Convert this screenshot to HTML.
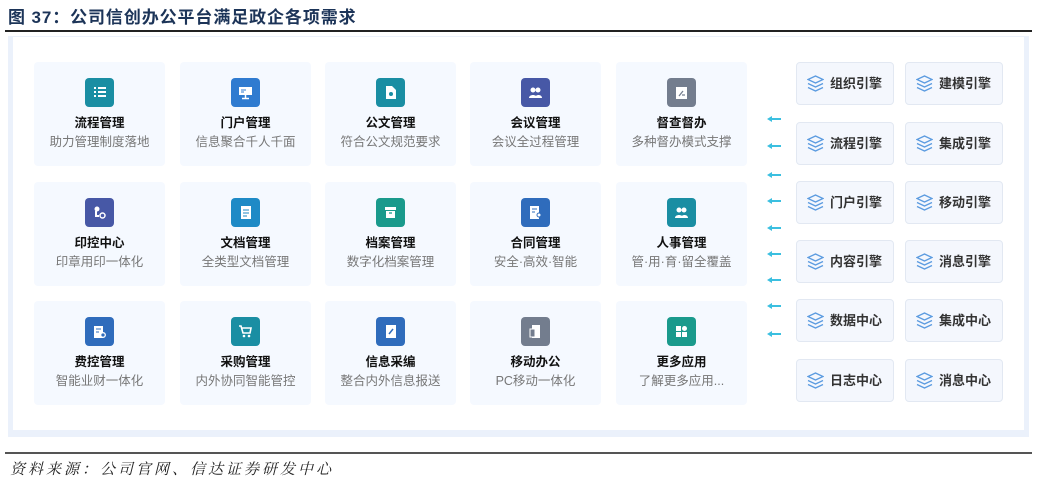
<!DOCTYPE html>
<html><head><meta charset="utf-8"><style>
*{margin:0;padding:0;box-sizing:border-box}
body{width:1037px;height:483px;background:#fff;position:relative;overflow:hidden;font-family:"Liberation Sans","Noto Sans CJK SC",sans-serif}
.title{position:absolute;left:8px;top:3px;font-size:17px;font-weight:bold;color:#1c3458;letter-spacing:0.9px}
.hl{position:absolute;left:5px;width:1027px;height:1.5px;background:#222}
.frame{position:absolute;left:8px;top:36px;width:1021px;height:401px;background:#ebf1fb}
.inner{position:absolute;left:13px;top:37px;width:1011px;height:393px;background:#fff}
.card{position:absolute;width:131px;height:104px;background:#f5f9ff;border-radius:4px}
.ic{position:absolute;left:51px;top:16px;width:29px;height:29px;border-radius:4px}
.ic svg{position:absolute;left:7px;top:7px}
.t{position:absolute;left:0;width:100%;top:50px;text-align:center;font-size:12.5px;font-weight:bold;color:#111}
.s{position:absolute;left:0;width:100%;top:69px;text-align:center;font-size:12.5px;color:#777}
.eng{position:absolute;width:98px;height:43px;background:#f4f7fd;border:1px solid #e2e8f2;border-radius:4px}
.eng svg{position:absolute;left:10px;top:12px}
.eng span{position:absolute;left:33px;top:10px;font-size:13px;font-weight:bold;color:#333}
.ar{position:absolute;left:767px;width:14px;height:6px}
.foot{position:absolute;left:10px;top:458px;font-size:15px;font-style:italic;color:#222;font-family:"Liberation Serif","Noto Serif CJK SC",serif;letter-spacing:3px}
</style></head><body>
<div class="title">图 37：公司信创办公平台满足政企各项需求</div>
<div class="hl" style="top:30px"></div>
<div class="frame"></div><div class="inner"></div>

<div class="card" style="left:34px;top:62px"><div class="ic" style="background:#1a8ea3"><svg width="15" height="15"><path d="M2 3h2M6 3h8M2 7h2M6 7h8M2 11h2M6 11h8" stroke="#fff" stroke-width="2"/></svg></div><div class="t">流程管理</div><div class="s">助力管理制度落地</div></div>
<div class="card" style="left:180px;top:62px"><div class="ic" style="background:#2f7bd0"><svg width="15" height="15"><rect x="1" y="2" width="13" height="8" fill="#fff"/><path d="M7.5 10v3M4 13.5h7" stroke="#fff" stroke-width="1.5"/><path d="M3 5h5M3 7h3" stroke="#2f7bd0"/></svg></div><div class="t">门户管理</div><div class="s">信息聚合千人千面</div></div>
<div class="card" style="left:325px;top:62px"><div class="ic" style="background:#1a8ea3"><svg width="15" height="15"><path d="M3 1h6l4 4v9H3z" fill="#fff"/><circle cx="8" cy="9" r="2" fill="#1a8ea3"/></svg></div><div class="t">公文管理</div><div class="s">符合公文规范要求</div></div>
<div class="card" style="left:470px;top:62px"><div class="ic" style="background:#4758a6"><svg width="15" height="15"><circle cx="5" cy="5" r="2.5" fill="#fff"/><circle cx="10" cy="5" r="2.5" fill="#fff"/><path d="M1 13c0-4 8-4 8 0zM7 13c0-4 7-4 7 0z" fill="#fff"/></svg></div><div class="t">会议管理</div><div class="s">会议全过程管理</div></div>
<div class="card" style="left:616px;top:62px"><div class="ic" style="background:#737d8e"><svg width="15" height="15"><rect x="2" y="2" width="11" height="12" fill="#fff"/><path d="M5 11l4-5M8 10h3" stroke="#737d8e" stroke-width="1.3"/></svg></div><div class="t">督查督办</div><div class="s">多种督办模式支撑</div></div>

<div class="card" style="left:34px;top:182px"><div class="ic" style="background:#4758a6"><svg width="15" height="15"><circle cx="5" cy="4" r="2.5" fill="#fff"/><path d="M4 6v5h3" stroke="#fff" stroke-width="2" fill="none"/><circle cx="10.5" cy="10.5" r="2.5" fill="none" stroke="#fff" stroke-width="1.5"/></svg></div><div class="t">印控中心</div><div class="s">印章用印一体化</div></div>
<div class="card" style="left:180px;top:182px"><div class="ic" style="background:#1e8ac6"><svg width="15" height="15"><rect x="3" y="1" width="10" height="13" fill="#fff"/><path d="M5 5h6M5 8h6M5 11h4" stroke="#1e8ac6"/></svg></div><div class="t">文档管理</div><div class="s">全类型文档管理</div></div>
<div class="card" style="left:325px;top:182px"><div class="ic" style="background:#1a9a8c"><svg width="15" height="15"><rect x="2" y="2" width="11" height="3" fill="#fff"/><path d="M3 6h9v7H3z" fill="#fff"/><path d="M6 8h3" stroke="#1a9a8c" stroke-width="1.3"/></svg></div><div class="t">档案管理</div><div class="s">数字化档案管理</div></div>
<div class="card" style="left:470px;top:182px"><div class="ic" style="background:#2f6cbc"><svg width="15" height="15"><rect x="2" y="1" width="9" height="13" fill="#fff"/><path d="M4 4h5M4 7h3" stroke="#2f6cbc"/><circle cx="11" cy="10" r="2" fill="#fff" stroke="#2f6cbc"/></svg></div><div class="t">合同管理</div><div class="s">安全·高效·智能</div></div>
<div class="card" style="left:616px;top:182px"><div class="ic" style="background:#1a8ea3"><svg width="15" height="15"><circle cx="5" cy="5" r="2.5" fill="#fff"/><circle cx="10" cy="5" r="2.5" fill="#fff"/><path d="M1 13c0-4 8-4 8 0zM7 13c0-4 7-4 7 0z" fill="#fff"/></svg></div><div class="t">人事管理</div><div class="s">管·用·育·留全覆盖</div></div>

<div class="card" style="left:34px;top:301px"><div class="ic" style="background:#2f6cbc"><svg width="15" height="15"><rect x="2" y="2" width="9" height="12" fill="#fff"/><path d="M4 5h5M4 8h3" stroke="#2f6cbc"/><circle cx="11" cy="11" r="2.3" fill="#2f6cbc" stroke="#fff" stroke-width="1.3"/></svg></div><div class="t">费控管理</div><div class="s">智能业财一体化</div></div>
<div class="card" style="left:180px;top:301px"><div class="ic" style="background:#1a8ea3"><svg width="15" height="15"><path d="M1 2h2l2 7h7l1-5H4" stroke="#fff" stroke-width="1.6" fill="none"/><circle cx="6" cy="12" r="1.3" fill="#fff"/><circle cx="11" cy="12" r="1.3" fill="#fff"/></svg></div><div class="t">采购管理</div><div class="s">内外协同智能管控</div></div>
<div class="card" style="left:325px;top:301px"><div class="ic" style="background:#2f6cbc"><svg width="15" height="15"><rect x="3" y="1" width="10" height="13" fill="#fff"/><path d="M6 10l4-5" stroke="#2f6cbc" stroke-width="1.5"/></svg></div><div class="t">信息采编</div><div class="s">整合内外信息报送</div></div>
<div class="card" style="left:470px;top:301px"><div class="ic" style="background:#737d8e"><svg width="15" height="15"><rect x="4" y="1" width="8" height="13" fill="#fff"/><rect x="2" y="5" width="5" height="8" fill="#737d8e" stroke="#fff"/></svg></div><div class="t">移动办公</div><div class="s">PC移动一体化</div></div>
<div class="card" style="left:616px;top:301px"><div class="ic" style="background:#1a9a8c"><svg width="15" height="15"><rect x="2" y="2" width="5" height="5" fill="#fff"/><circle cx="10.5" cy="4.5" r="2.5" fill="#fff"/><rect x="2" y="8" width="5" height="5" fill="#fff"/><rect x="8" y="8" width="5" height="5" fill="#fff"/></svg></div><div class="t">更多应用</div><div class="s">了解更多应用...</div></div>

<svg class="ar" style="top:116px"><path d="M0 3l5-3v2h9v2H5v2z" fill="#3bbfe0"/></svg>
<svg class="ar" style="top:143px"><path d="M0 3l5-3v2h9v2H5v2z" fill="#3bbfe0"/></svg>
<svg class="ar" style="top:172px"><path d="M0 3l5-3v2h9v2H5v2z" fill="#3bbfe0"/></svg>
<svg class="ar" style="top:198px"><path d="M0 3l5-3v2h9v2H5v2z" fill="#3bbfe0"/></svg>
<svg class="ar" style="top:225px"><path d="M0 3l5-3v2h9v2H5v2z" fill="#3bbfe0"/></svg>
<svg class="ar" style="top:251px"><path d="M0 3l5-3v2h9v2H5v2z" fill="#3bbfe0"/></svg>
<svg class="ar" style="top:277px"><path d="M0 3l5-3v2h9v2H5v2z" fill="#3bbfe0"/></svg>
<svg class="ar" style="top:303px"><path d="M0 3l5-3v2h9v2H5v2z" fill="#3bbfe0"/></svg>
<svg class="ar" style="top:331px"><path d="M0 3l5-3v2h9v2H5v2z" fill="#3bbfe0"/></svg>

<div class="eng" style="left:796px;top:62px"><svg width="17" height="17"><path d="M8.5 1L16 4.5 8.5 8 1 4.5z M1 8.5L8.5 12 16 8.5 M1 12.5L8.5 16 16 12.5" fill="none" stroke="#5b9be0" stroke-width="1.3"/></svg><span>组织引擎</span></div>
<div class="eng" style="left:905px;top:62px"><svg width="17" height="17"><path d="M8.5 1L16 4.5 8.5 8 1 4.5z M1 8.5L8.5 12 16 8.5 M1 12.5L8.5 16 16 12.5" fill="none" stroke="#5b9be0" stroke-width="1.3"/></svg><span>建模引擎</span></div>
<div class="eng" style="left:796px;top:122px"><svg width="17" height="17"><path d="M8.5 1L16 4.5 8.5 8 1 4.5z M1 8.5L8.5 12 16 8.5 M1 12.5L8.5 16 16 12.5" fill="none" stroke="#5b9be0" stroke-width="1.3"/></svg><span>流程引擎</span></div>
<div class="eng" style="left:905px;top:122px"><svg width="17" height="17"><path d="M8.5 1L16 4.5 8.5 8 1 4.5z M1 8.5L8.5 12 16 8.5 M1 12.5L8.5 16 16 12.5" fill="none" stroke="#5b9be0" stroke-width="1.3"/></svg><span>集成引擎</span></div>
<div class="eng" style="left:796px;top:181px"><svg width="17" height="17"><path d="M8.5 1L16 4.5 8.5 8 1 4.5z M1 8.5L8.5 12 16 8.5 M1 12.5L8.5 16 16 12.5" fill="none" stroke="#5b9be0" stroke-width="1.3"/></svg><span>门户引擎</span></div>
<div class="eng" style="left:905px;top:181px"><svg width="17" height="17"><path d="M8.5 1L16 4.5 8.5 8 1 4.5z M1 8.5L8.5 12 16 8.5 M1 12.5L8.5 16 16 12.5" fill="none" stroke="#5b9be0" stroke-width="1.3"/></svg><span>移动引擎</span></div>
<div class="eng" style="left:796px;top:240px"><svg width="17" height="17"><path d="M8.5 1L16 4.5 8.5 8 1 4.5z M1 8.5L8.5 12 16 8.5 M1 12.5L8.5 16 16 12.5" fill="none" stroke="#5b9be0" stroke-width="1.3"/></svg><span>内容引擎</span></div>
<div class="eng" style="left:905px;top:240px"><svg width="17" height="17"><path d="M8.5 1L16 4.5 8.5 8 1 4.5z M1 8.5L8.5 12 16 8.5 M1 12.5L8.5 16 16 12.5" fill="none" stroke="#5b9be0" stroke-width="1.3"/></svg><span>消息引擎</span></div>
<div class="eng" style="left:796px;top:299px"><svg width="17" height="17"><path d="M8.5 1L16 4.5 8.5 8 1 4.5z M1 8.5L8.5 12 16 8.5 M1 12.5L8.5 16 16 12.5" fill="none" stroke="#5b9be0" stroke-width="1.3"/></svg><span>数据中心</span></div>
<div class="eng" style="left:905px;top:299px"><svg width="17" height="17"><path d="M8.5 1L16 4.5 8.5 8 1 4.5z M1 8.5L8.5 12 16 8.5 M1 12.5L8.5 16 16 12.5" fill="none" stroke="#5b9be0" stroke-width="1.3"/></svg><span>集成中心</span></div>
<div class="eng" style="left:796px;top:359px"><svg width="17" height="17"><path d="M8.5 1L16 4.5 8.5 8 1 4.5z M1 8.5L8.5 12 16 8.5 M1 12.5L8.5 16 16 12.5" fill="none" stroke="#5b9be0" stroke-width="1.3"/></svg><span>日志中心</span></div>
<div class="eng" style="left:905px;top:359px"><svg width="17" height="17"><path d="M8.5 1L16 4.5 8.5 8 1 4.5z M1 8.5L8.5 12 16 8.5 M1 12.5L8.5 16 16 12.5" fill="none" stroke="#5b9be0" stroke-width="1.3"/></svg><span>消息中心</span></div>

<div class="hl" style="top:452px;background:#555;height:1.5px"></div>
<div class="foot">资料来源：公司官网、信达证券研发中心</div>
</body></html>
